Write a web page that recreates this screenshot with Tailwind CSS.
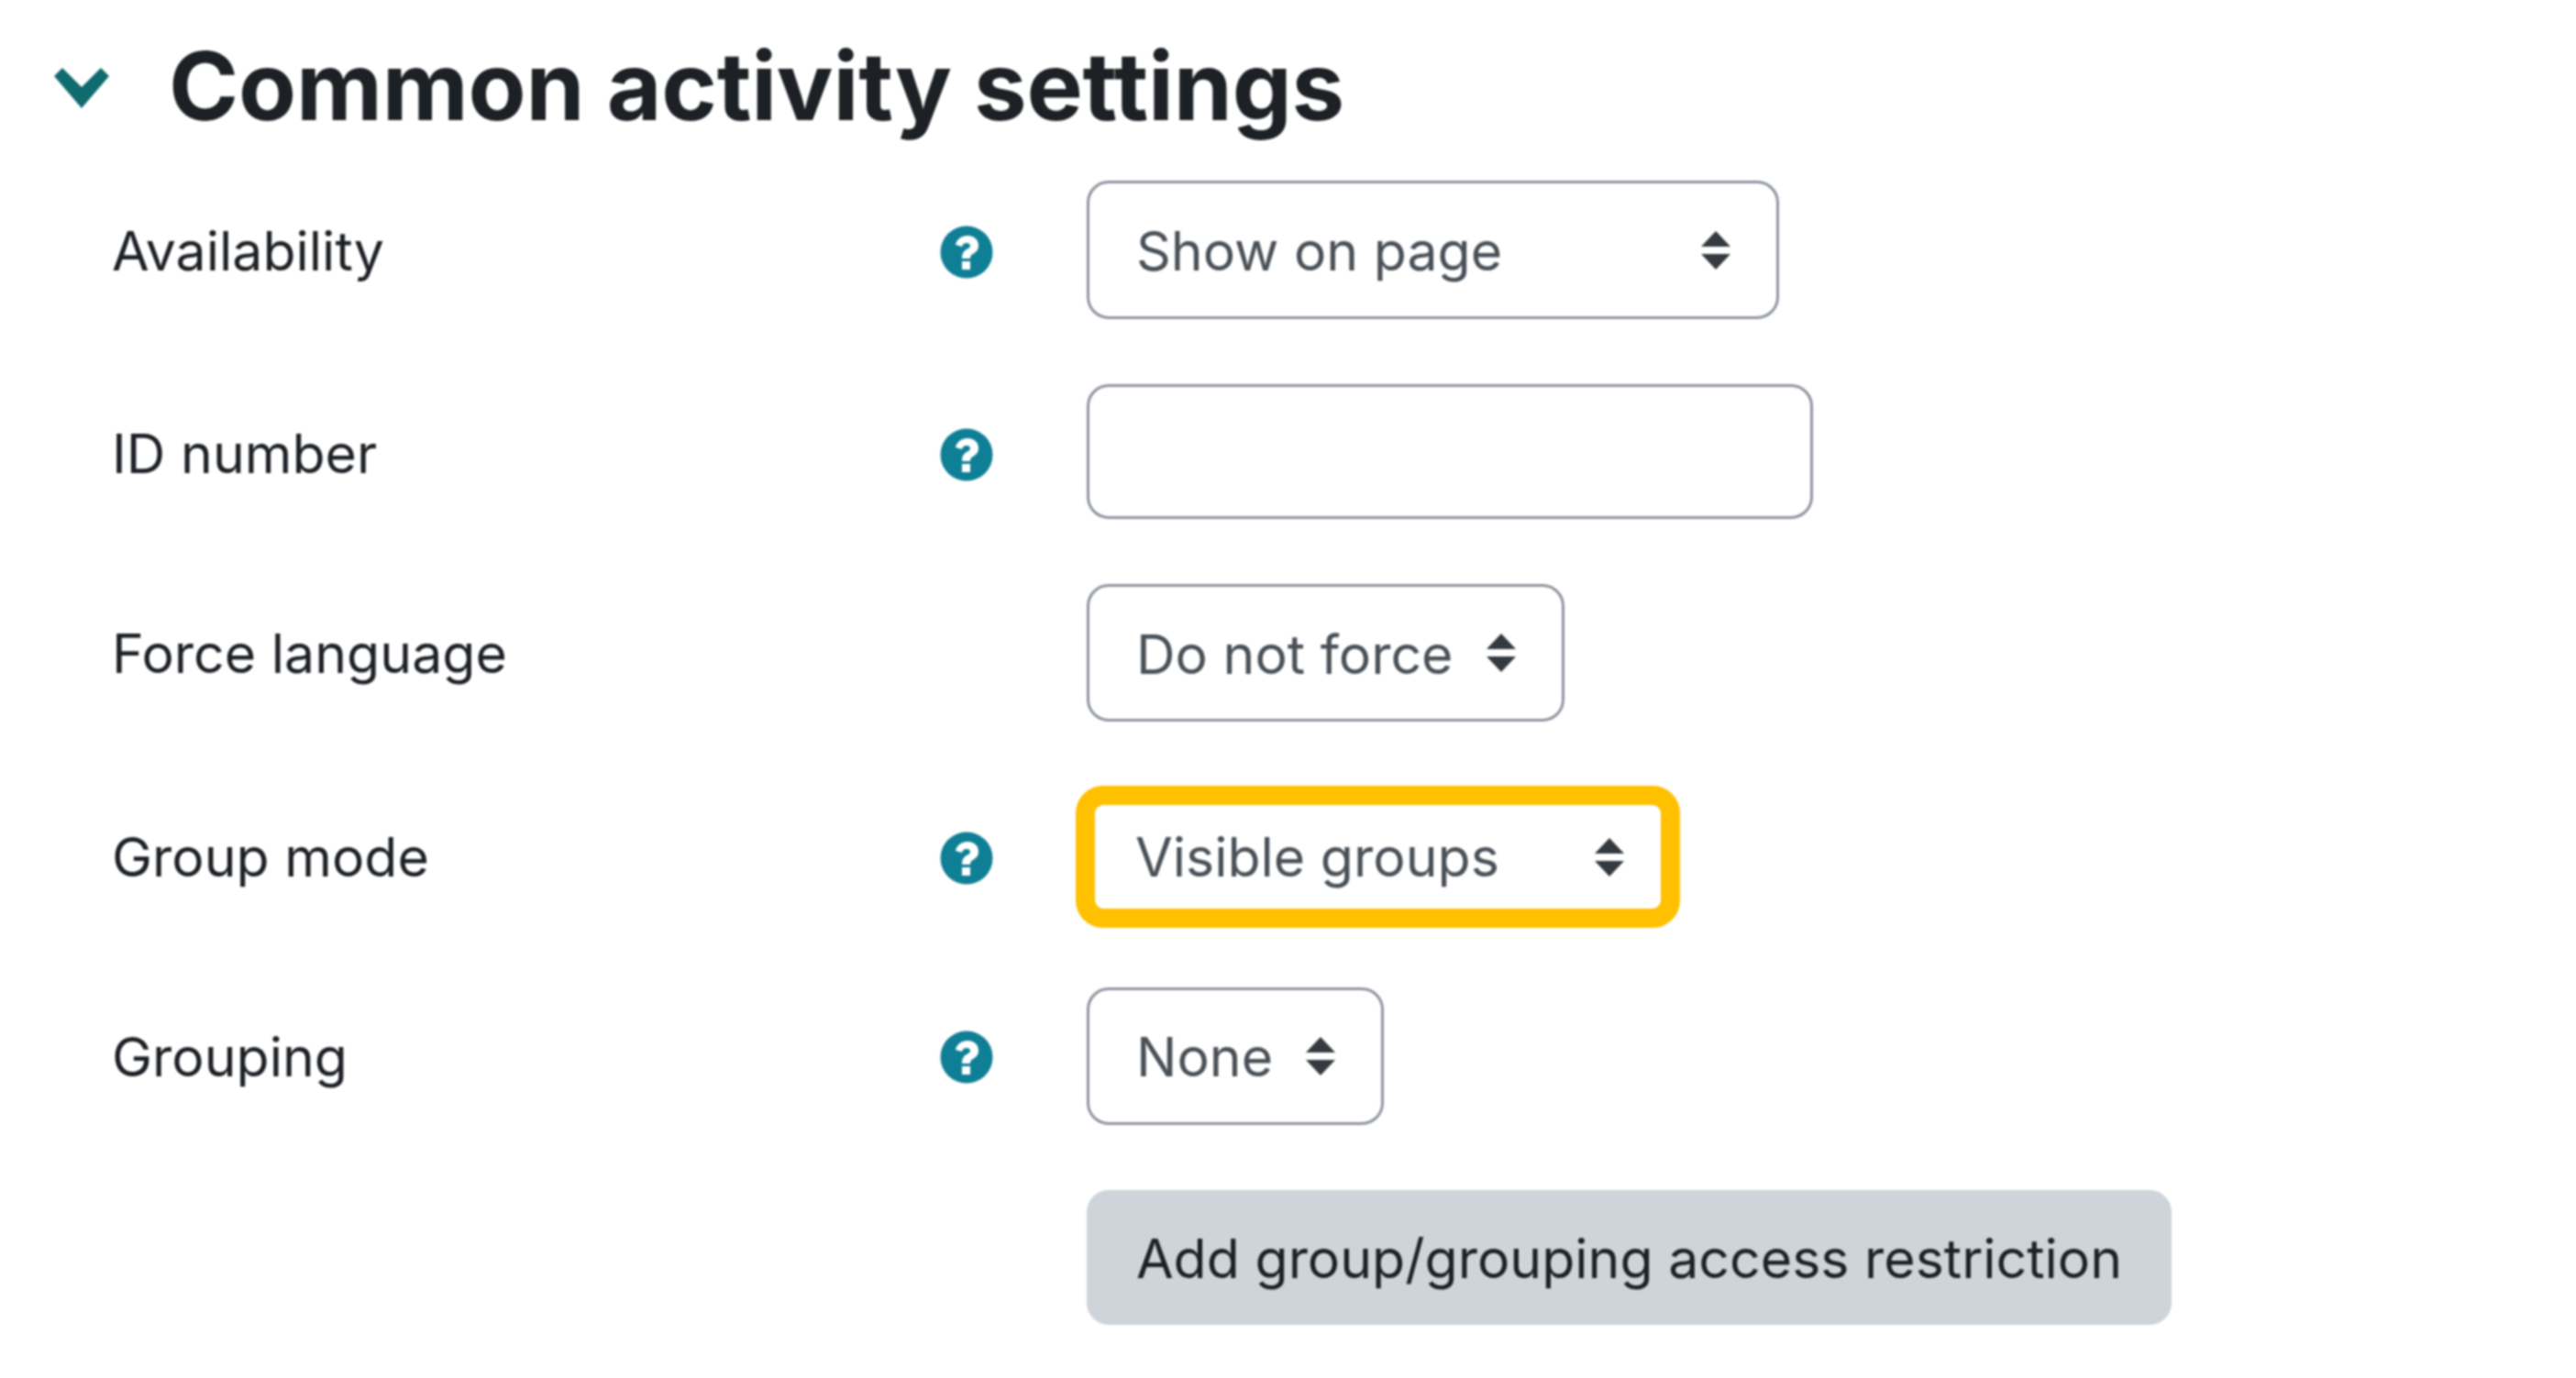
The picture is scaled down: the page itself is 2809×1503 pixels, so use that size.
<!DOCTYPE html>
<html><head><meta charset="utf-8"><script src="https://cdn.jsdelivr.net/npm/@tailwindcss/browser@4"></script></head>
<body class="bg-white">
<div class="w-[2809px] h-[1503px] overflow-hidden bg-white font-['Inter','Liberation_Sans',sans-serif] text-[#1d2125] text-[59px] leading-none blur-[1px]">
  <div class="flex items-center h-[186px] pl-[59px]">
    <svg class="w-[60px] h-[44px] mt-[5px] text-[#0f6b6e]" viewBox="0 0 60 44" fill="currentColor"><path d="M0 9 9 0 30 21 51 0 60 9 30 44Z"/></svg>
    <h1 class="ml-[65px] text-[103px] font-bold tracking-[-0.2px]">Common activity settings</h1>
  </div>
  <div class="flex flex-col pl-[122px] pt-[11px]">
    <div class="flex items-center h-[151px]">
      <span class="w-[902px] pt-[1px]">Availability</span>
      <svg class="w-[58px] h-[58px] mt-[4px] ml-[1px]" viewBox="0 0 58 58"><circle cx="29" cy="29" r="28.5" fill="#0f7f96"/><path d="M17 21c1-6 7-10 13-10 7 0 12 4 12 11 0 5-3 7-6 9-2 1-3 2-3 5h-9c0-6 2-8 5-10 2-1 4-2 4-4 0-2-2-3-4-3-3 0-4 1-5 4Z M24 39h9v9h-9Z" fill="#fff"/></svg>
      <div class="ml-[102px] w-[755px] h-full flex items-center justify-between pl-[51px] pr-[50px] border-[3px] border-[#8f959e] rounded-[24px] text-[#495057]"><span class="pt-[2px]">Show on page</span><svg class="w-[32px] h-[42px] text-[#343a40]" viewBox="0 0 32 42" fill="currentColor"><path d="M16 0 32 17H0Z M0 25H32L16 42Z"/></svg></div>
    </div>
    <div class="flex items-center h-[147px] mt-[71px]">
      <span class="w-[902px] pt-[4px]">ID number</span>
      <svg class="w-[58px] h-[58px] mt-[6px] ml-[1px]" viewBox="0 0 58 58"><circle cx="29" cy="29" r="28.5" fill="#0f7f96"/><path d="M17 21c1-6 7-10 13-10 7 0 12 4 12 11 0 5-3 7-6 9-2 1-3 2-3 5h-9c0-6 2-8 5-10 2-1 4-2 4-4 0-2-2-3-4-3-3 0-4 1-5 4Z M24 39h9v9h-9Z" fill="#fff"/></svg>
      <div class="ml-[102px] w-[792px] h-full border-[3px] border-[#8f959e] rounded-[24px]"></div>
    </div>
    <div class="flex items-center h-[150px] mt-[71px]">
      <span class="w-[1063px] pt-[1px]">Force language</span>
      <div class="w-[521px] h-full flex items-center justify-between pl-[51px] pr-[50px] border-[3px] border-[#8f959e] rounded-[24px] text-[#495057]"><span class="pt-[2px]">Do not force</span><svg class="w-[32px] h-[42px] text-[#343a40]" viewBox="0 0 32 42" fill="currentColor"><path d="M16 0 32 17H0Z M0 25H32L16 42Z"/></svg></div>
    </div>
    <div class="flex items-center h-[155px] mt-[70px]">
      <span class="w-[902px]">Group mode</span>
      <svg class="w-[58px] h-[58px] mt-[2px] ml-[1px]" viewBox="0 0 58 58"><circle cx="29" cy="29" r="28.5" fill="#0f7f96"/><path d="M17 21c1-6 7-10 13-10 7 0 12 4 12 11 0 5-3 7-6 9-2 1-3 2-3 5h-9c0-6 2-8 5-10 2-1 4-2 4-4 0-2-2-3-4-3-3 0-4 1-5 4Z M24 39h9v9h-9Z" fill="#fff"/></svg>
      <div class="ml-[90px] w-[659px] h-full flex items-center justify-between pl-[44px] pr-[40px] border-[21px] border-[#ffc000] rounded-[30px] text-[#495057]">Visible groups<svg class="w-[32px] h-[42px] text-[#343a40]" viewBox="0 0 32 42" fill="currentColor"><path d="M16 0 32 17H0Z M0 25H32L16 42Z"/></svg></div>
    </div>
    <div class="flex items-center h-[150px] mt-[65px]">
      <span class="w-[902px]">Grouping</span>
      <svg class="w-[58px] h-[58px] mt-[2px] ml-[1px]" viewBox="0 0 58 58"><circle cx="29" cy="29" r="28.5" fill="#0f7f96"/><path d="M17 21c1-6 7-10 13-10 7 0 12 4 12 11 0 5-3 7-6 9-2 1-3 2-3 5h-9c0-6 2-8 5-10 2-1 4-2 4-4 0-2-2-3-4-3-3 0-4 1-5 4Z M24 39h9v9h-9Z" fill="#fff"/></svg>
      <div class="ml-[102px] w-[324px] h-full flex items-center justify-between pl-[51px] pr-[50px] border-[3px] border-[#8f959e] rounded-[24px] text-[#495057]">None<svg class="w-[32px] h-[42px] text-[#343a40]" viewBox="0 0 32 42" fill="currentColor"><path d="M16 0 32 17H0Z M0 25H32L16 42Z"/></svg></div>
    </div>
    <div class="flex items-center h-[147px] mt-[71px] pl-[1063px]">
      <div class="w-[1183px] h-full flex items-center justify-center bg-[#ced4da] rounded-[24px] pt-[2px]">Add group/grouping access restriction</div>
    </div>
  </div>
</div>
</body></html>
